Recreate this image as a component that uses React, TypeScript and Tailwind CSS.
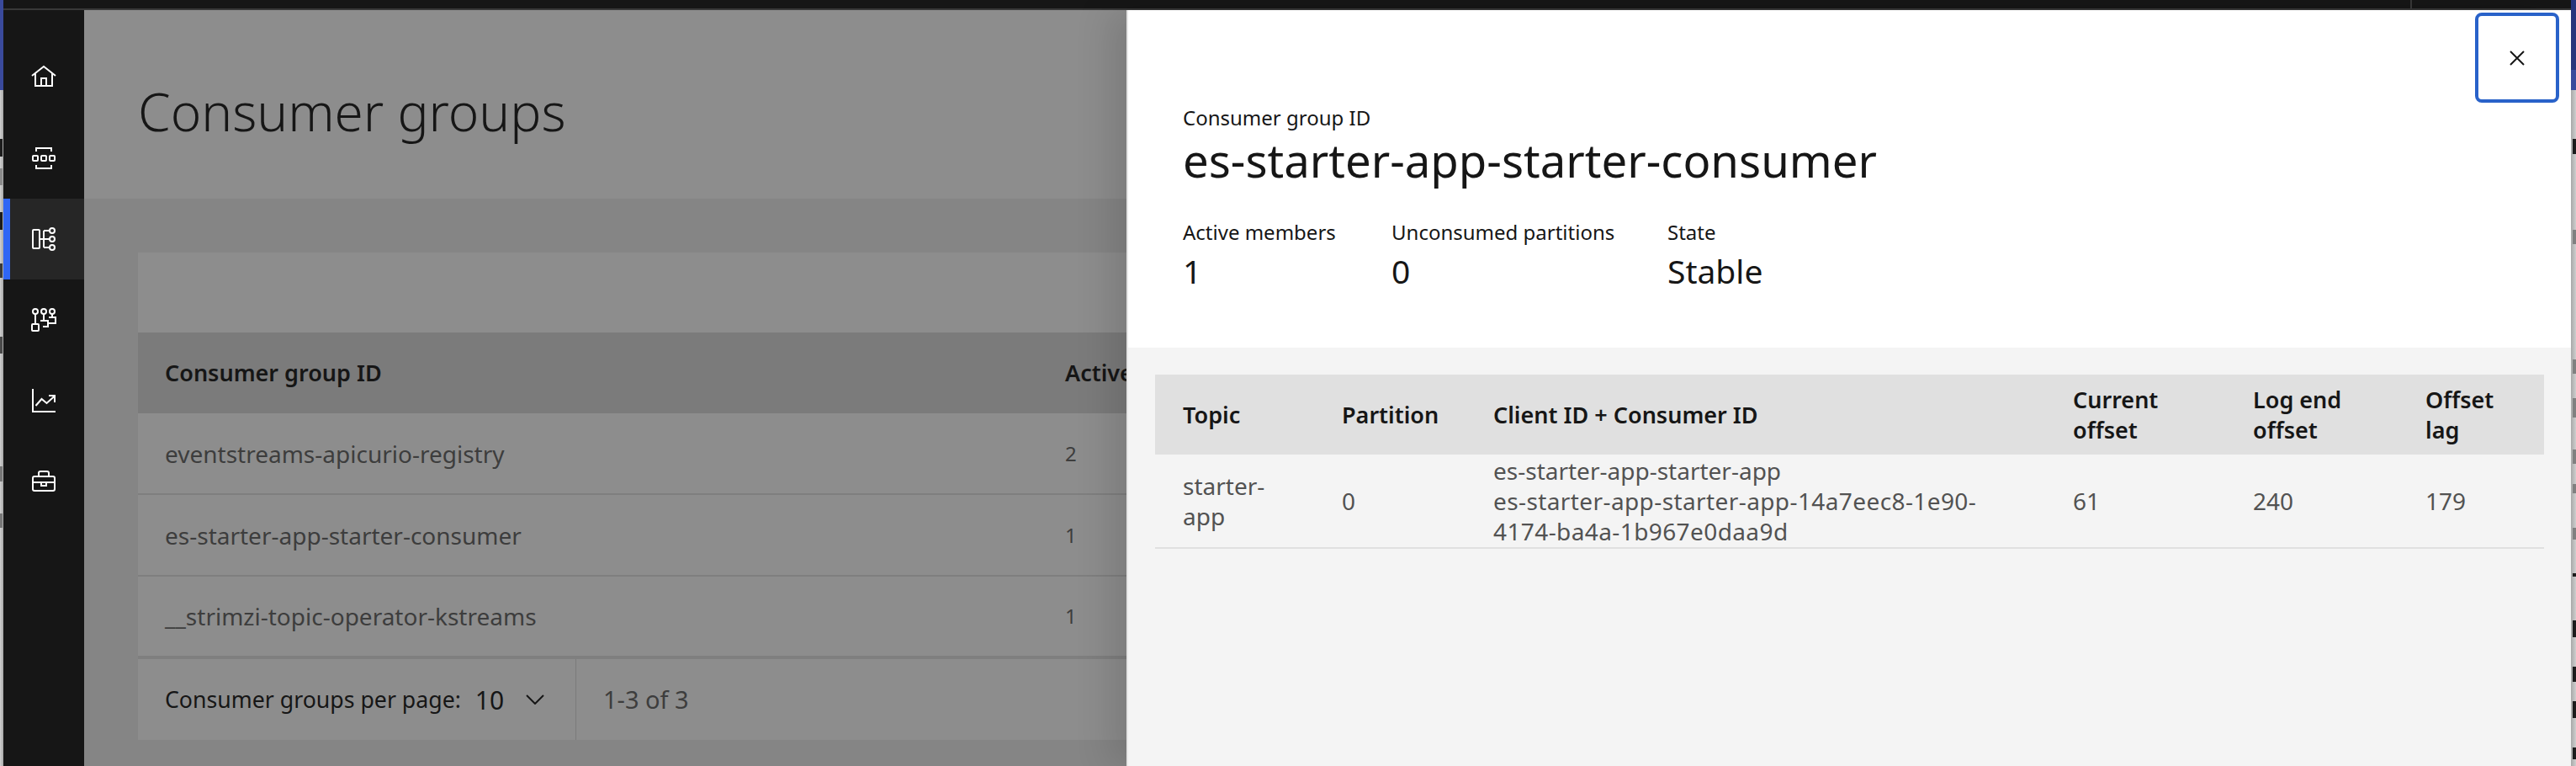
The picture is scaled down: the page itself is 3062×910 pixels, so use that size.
const font = "font-['Noto_Sans','Liberation_Sans',sans-serif]";

const Icon = ({ children }: { children: React.ReactNode }) => (
  <svg width="32" height="32" viewBox="0 0 32 32" fill="none" stroke="#ffffff" strokeWidth="2">{children}</svg>
);

const navIcons = [
  <Icon key="home">
    <path d="M2 14 16 3l14 11" />
    <path d="M6 11v15h20V11" />
    <path d="M13 26V17h6v9" />
  </Icon>,
  <Icon key="grid">
    <path d="M7 8V4h18v4M7 24v4h18v-4" />
    <rect x="3" y="13" width="6" height="6" rx="1" />
    <rect x="13" y="13" width="6" height="6" rx="1" />
    <rect x="23" y="13" width="6" height="6" rx="1" />
  </Icon>,
  <Icon key="groups">
    <rect x="3" y="5" width="8" height="22" rx="1" />
    <path d="M11 16h12M16 6v20M16 6h7M16 26h7" />
    <circle cx="26" cy="6" r="3" />
    <circle cx="26" cy="16" r="3" />
    <circle cx="26" cy="26" r="3" />
  </Icon>,
  <Icon key="flow">
    <circle cx="6" cy="6" r="3" />
    <circle cx="16" cy="6" r="3" />
    <circle cx="26" cy="6" r="3" />
    <path d="M6 9v12M16 9v8M12 17h9v7h-6" />
    <path d="M26 9v4M22 13h8v7h-8" />
    <rect x="2" y="21" width="8" height="8" rx="1" />
  </Icon>,
  <Icon key="chart">
    <path d="M3 2v27h27" />
    <path d="M6.5 22l7-8 6 5 10-9" />
    <path d="M22 10h7v8" />
  </Icon>,
  <Icon key="case">
    <rect x="3" y="10" width="26" height="17" rx="2" />
    <path d="M10 10V6a2 2 0 0 1 2-2h8a2 2 0 0 1 2 2v4M3 17h26" />
    <rect x="13" y="17" width="6" height="4" />
  </Icon>,
];

const rows = [
  { name: "eventstreams-apicurio-registry", n: "2", cls: "h-[97px] border-b-[2px]" },
  { name: "es-starter-app-starter-consumer", n: "1", cls: "h-[97px] border-b-[2px]" },
  { name: "__strimzi-topic-operator-kstreams", n: "1", cls: "h-[98px] border-b-[4px]" },
];

const leftMarks = [
  { top: 165, h: 21, c: "#1c1c1c" },
  { top: 200, h: 20, c: "#8a8a8a" },
  { top: 252, h: 21, c: "#1c1c1c" },
  { top: 313, h: 17, c: "#3a3a3a" },
  { top: 400, h: 20, c: "#4a4a4a" },
  { top: 554, h: 18, c: "#777777" },
  { top: 610, h: 17, c: "#777777" },
];

const rightMarks = [
  { top: 165, h: 18, c: "#1c1c1c" },
  { top: 273, h: 17, c: "#808080" },
  { top: 427, h: 17, c: "#808080" },
  { top: 473, h: 23, c: "#808080" },
  { top: 534, h: 17, c: "#808080" },
  { top: 575, h: 11, c: "#808080" },
  { top: 627, h: 14, c: "#808080" },
  { top: 681, h: 4, c: "#1c1c1c" },
  { top: 737, h: 20, c: "#1c1c1c" },
  { top: 792, h: 18, c: "#1c1c1c" },
  { top: 833, h: 20, c: "#1c1c1c" },
  { top: 888, h: 14, c: "#1c1c1c" },
];

function Strip({ marks, right }: { marks: { top: number; h: number; c: string }[]; right?: boolean }) {
  return (
    <div className={right ? "relative w-[6px] shrink-0 flex flex-col bg-linear-to-r from-[#a8a8a8] to-[#cfcfcf]" : "relative w-[4px] shrink-0 flex flex-col bg-linear-to-r from-[#d0d0d0] to-[#a8a8a8]"}>
      {right ? (
        <>
          <div className="h-[83px] bg-[#27357c]" />
          <div className="h-[24px] bg-[#3a4a9c]" />
        </>
      ) : (
        <div className="h-[107px] bg-[#3a4a9c]" />
      )}
      {marks.map((m) => (
        <div
          key={m.top}
          className={right ? "absolute left-[2px] w-[4px]" : "absolute left-0 w-[3px]"}
          style={{ top: m.top, height: m.h, backgroundColor: m.c }}
        />
      ))}
    </div>
  );
}

function Sidebar() {
  return (
    <nav className="w-[96px] shrink-0 bg-[#161616] pt-[32px]">
      {navIcons.map((icon, i) => (
        <div
          key={i}
          className={
            i === 2
              ? "h-[96px] flex items-center justify-center bg-[#262626] border-l-[8px] border-[#2f66f5] pr-[8px]"
              : "h-[96px] flex items-center justify-center"
          }
        >
          {icon}
        </div>
      ))}
    </nav>
  );
}

function Background() {
  return (
    <main className="flex-1 min-w-0 bg-[#858585] flex flex-col">
      <header className="h-[224px] shrink-0 bg-[#8d8d8d] pl-[64px] pt-[16px] flex items-center">
        <h1 className="text-[62px] leading-[72px] font-light text-[#161616]">Consumer groups</h1>
      </header>
      <section className="mt-[64px] ml-[64px] flex flex-col">
        <div className="h-[95px] bg-[#8d8d8d]" />
        <div className="h-[96px] bg-[#7b7b7b] grid grid-cols-[1070px_1fr] items-center pl-[32px] text-[#161616] text-[27px] font-semibold">
          <span>Consumer group ID</span>
          <span>Active members</span>
        </div>
        {rows.map((r) => (
          <div key={r.name} className={`${r.cls} bg-[#8d8d8d] border-[#7f7f7f] grid grid-cols-[1070px_1fr] items-center pl-[32px] text-[#3d3d3d] text-[28px]`}>
            <span>{r.name}</span>
            <span className="text-[24px]">{r.n}</span>
          </div>
        ))}
        <div className="h-[96px] bg-[#8d8d8d] flex items-center text-[27px]">
          <div className="w-[521px] h-full border-r border-[#7b7b7b] flex items-center pl-[32px] text-[#161616]">
            <span className="text-[26.7px]">Consumer groups per page:</span>
            <span className="ml-[17px] text-[30px]">10</span>
            <svg className="ml-[26px]" width="22" height="12" viewBox="0 0 22 12" fill="none" stroke="#161616" strokeWidth="2"><path d="M1 1l10 10L21 1" /></svg>
          </div>
          <span className="pl-[32px] text-[29px] text-[#3d3d3d]">1-3 of 3</span>
        </div>
      </section>
    </main>
  );
}

function Stat({ label, value, className }: { label: string; value: string; className: string }) {
  return (
    <div className={className}>
      <div className="text-[24px] leading-[32px] text-[#161616]">{label}</div>
      <div className="text-[39px] leading-[60px] text-[#161616]">{value}</div>
    </div>
  );
}

function Panel() {
  const headCell = "h-[95px] bg-[#e0e0e0] flex items-center";
  const cell = "h-[112px] border-b-[2px] border-[#e0e0e0] flex items-center";
  return (
    <aside className="absolute left-[1335px] top-[12px] w-[1717px] h-[898px] bg-[#f4f4f4] border-l-[2px] border-[#e6e6e6] flex flex-col shadow-[-20px_0_40px_rgba(0,0,0,0.12)]">
      <div className="h-[401px] bg-white shrink-0 pl-[65px] pt-[112px]">
        <div className="text-[24px] leading-[32px] text-[#161616]">Consumer group ID</div>
        <div className="text-[54.5px] leading-[68px] text-[#161616]">es-starter-app-starter-consumer</div>
        <div className="flex mt-[36px]">
          <Stat label="Active members" value="1" className="w-[248px]" />
          <Stat label="Unconsumed partitions" value="0" className="w-[328px]" />
          <Stat label="State" value="Stable" className="w-[300px]" />
        </div>
        <button className="absolute right-[14px] top-[3px] w-[100px] h-[107px] bg-white border-[4px] border-[#2962c9] rounded-[8px] flex items-center justify-center">
          <svg width="18" height="18" viewBox="0 0 18 18" fill="none" stroke="#161616" strokeWidth="2"><path d="M1 1l16 16M17 1 1 17" /></svg>
        </button>
      </div>
      <div className="ml-[32px] mr-[32px] mt-[32px] grid grid-cols-[222px_180px_689px_214px_205px_141px]">
        <div className="contents text-[#161616] text-[27px] leading-[36px] font-semibold">
          {["Topic", "Partition", "Client ID + Consumer ID", "Current offset", "Log end offset", "Offset lag"].map((h, i) => (
            <div key={h} className={i === 0 ? `${headCell} pl-[33px]` : `${headCell} pr-[40px]`}>
              <span>{h}</span>
            </div>
          ))}
        </div>
        <div className="contents text-[#525252] text-[28px] leading-[36px]">
          <div className={`${cell} pl-[33px] pr-[60px]`}>starter-app</div>
          <div className={cell}>0</div>
          <div className={`${cell} whitespace-nowrap`}>
            <div>
              <div>es-starter-app-starter-app</div>
              <div className="tracking-[0.4px]">es-starter-app-starter-app-14a7eec8-1e90-</div>
              <div className="tracking-[0.4px]">4174-ba4a-1b967e0daa9d</div>
            </div>
          </div>
          <div className={cell}>61</div>
          <div className={cell}>240</div>
          <div className={cell}>179</div>
        </div>
      </div>
    </aside>
  );
}

export default function App() {
  return (
    <div className={`${font} w-[3062px] h-[910px] overflow-hidden flex bg-[#c6c6c6]`}>
      <Strip marks={leftMarks} />
      <div className="w-[3052px] shrink-0 flex flex-col relative">
        <div className="h-[12px] shrink-0 bg-[#161616] border-b-[2px] border-[#393939] flex justify-end">
          <div className="w-[2px] h-[10px] bg-[#393939] mr-[189px]" />
        </div>
        <div className="flex-1 min-h-0 flex">
          <Sidebar />
          <Background />
        </div>
        <Panel />
      </div>
      <Strip marks={rightMarks} right />
    </div>
  );
}
